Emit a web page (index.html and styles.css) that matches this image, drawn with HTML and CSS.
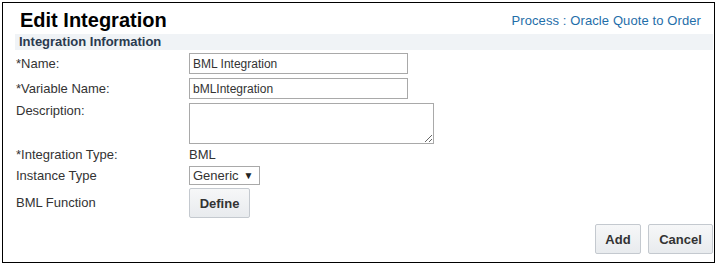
FILE: index.html
```html
<!DOCTYPE html>
<html>
<head>
<meta charset="utf-8">
<link rel="stylesheet" href="styles.css">
</head>
<body>
<div class="frame">
  <div class="header">
    <h1 class="title">Edit Integration</h1>
    <a class="process">Process : Oracle Quote to Order</a>
  </div>
  <div class="section">Integration Information</div>
  <div class="form">
    <div class="row r-name"><span class="label">*Name:</span><input class="text" type="text" value="BML Integration"></div>
    <div class="row r-var"><span class="label">*Variable Name:</span><input class="text" type="text" value="bMLIntegration"></div>
    <div class="row r-desc"><span class="label">Description:</span><textarea class="area"></textarea></div>
    <div class="row r-type"><span class="label">*Integration Type:</span><span class="value">BML</span></div>
    <div class="row r-inst"><span class="label">Instance Type</span><span class="select">Generic <span class="arrow">▼</span></span></div>
    <div class="row r-func"><span class="label">BML Function</span><button class="btn define">Define</button></div>
  </div>
  <div class="actions">
    <button class="btn add">Add</button>
    <button class="btn cancel">Cancel</button>
  </div>
</div>
</body>
</html>
```
FILE: styles.css
```css
* { box-sizing: border-box; }
html, body { margin: 0; padding: 0; background: #fff; }
body { font-family: "Liberation Sans", Arial, sans-serif; color: #333; font-size: 13px; }
.frame {
  margin: 2px 0 0 2px;
  width: 713px;
  height: 261px;
  border: 1px solid #000;
  padding: 0 1px 0 12px;
  display: flex;
  flex-direction: column;
}
.header { display: flex; justify-content: space-between; align-items: flex-end; height: 31px; padding: 0 12px 0 5px; }
.title { margin: 0; font-size: 20px; font-weight: bold; color: #000; line-height: 24px; padding-bottom: 2px; }
.process { color: #1f6ea9; font-size: 13px; line-height: 16px; padding-bottom: 5px; letter-spacing: 0.1px; }
.section {
  background: #f0f3f6;
  height: 16px;
  line-height: 16px;
  padding-left: 4px;
  font-weight: bold;
  color: #2a3a4f;
  font-size: 13px;
}
.form { display: flex; flex-direction: column; padding-left: 1px; padding-top: 3px; }
.row { display: flex; align-items: flex-start; }
.label { width: 173px; flex: none; line-height: 16px; }
.text {
  width: 219px; height: 21px; border: 1px solid #a9a9a9; padding: 0 3px;
  font-family: "Liberation Sans", Arial, sans-serif; font-size: 12px; color: #333; margin: 0;
}
.r-name .label, .r-var .label { padding-top: 3px; }
.r-var { margin-top: 4px; }
.r-desc { margin-top: 4px; }
.area { width: 245px; height: 41px; border: 1px solid #a9a9a9; margin: 0; resize: both; }
.r-type { margin-top: 3px; }
.value { line-height: 16px; }
.r-inst { margin-top: 3px; align-items: center; }
.select {
  display: inline-flex; align-items: center; height: 19px; width: 71px; border: 1px solid #a9a9a9;
  padding: 0 3px; font-size: 13px; color: #333;
}
.arrow { font-size: 10px; margin-left: 5px; color: #222; }
.r-func { margin-top: 3px; align-items: center; }
.btn {
  font-family: "Liberation Sans", Arial, sans-serif; font-weight: bold; font-size: 13px; color: #333;
  background: linear-gradient(#f6f7f8, #e8ebee);
  border: 1px solid #c4c9cf; border-radius: 2px; height: 30px; padding: 0; margin: 0;
}
.define { width: 61px; }
.actions { display: flex; justify-content: flex-end; gap: 7px; margin-top: auto; margin-bottom: 8px; }
.add { width: 46px; }
.cancel { width: 65px; }
```
